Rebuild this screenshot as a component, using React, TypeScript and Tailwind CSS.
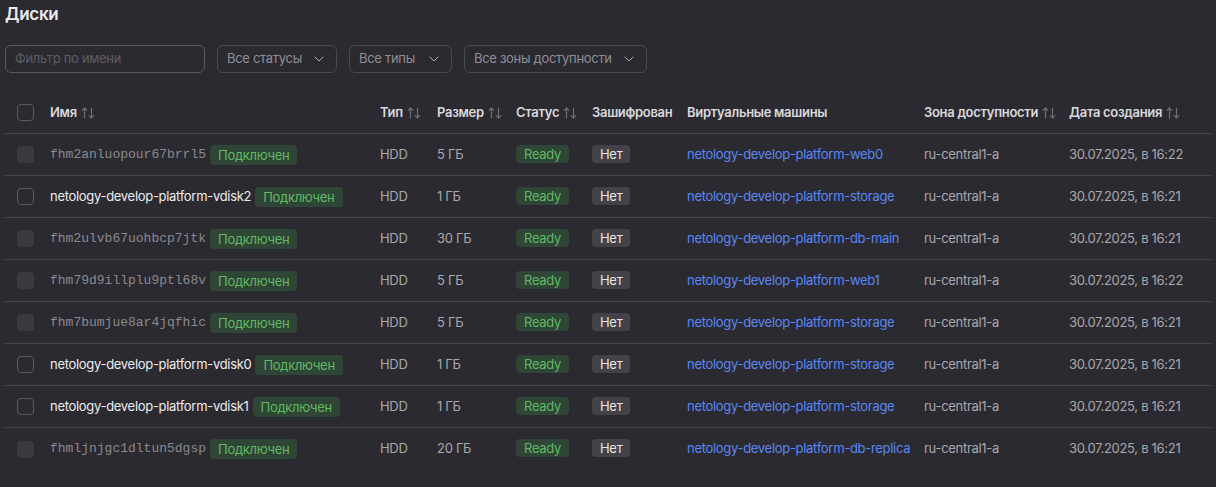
import { ChevronDown } from 'lucide-react'

type Disk = {
  name: string
  mono: boolean
  size: string
  vm: string
  date: string
}

const disks: Disk[] = [
  { name: 'fhm2anluopour67brrl5', mono: true, size: '5 ГБ', vm: 'netology-develop-platform-web0', date: '30.07.2025, в 16:22' },
  { name: 'netology-develop-platform-vdisk2', mono: false, size: '1 ГБ', vm: 'netology-develop-platform-storage', date: '30.07.2025, в 16:21' },
  { name: 'fhm2ulvb67uohbcp7jtk', mono: true, size: '30 ГБ', vm: 'netology-develop-platform-db-main', date: '30.07.2025, в 16:21' },
  { name: 'fhm79d9illplu9ptl68v', mono: true, size: '5 ГБ', vm: 'netology-develop-platform-web1', date: '30.07.2025, в 16:22' },
  { name: 'fhm7bumjue8ar4jqfhic', mono: true, size: '5 ГБ', vm: 'netology-develop-platform-storage', date: '30.07.2025, в 16:21' },
  { name: 'netology-develop-platform-vdisk0', mono: false, size: '1 ГБ', vm: 'netology-develop-platform-storage', date: '30.07.2025, в 16:21' },
  { name: 'netology-develop-platform-vdisk1', mono: false, size: '1 ГБ', vm: 'netology-develop-platform-storage', date: '30.07.2025, в 16:21' },
  { name: 'fhmljnjgc1dltun5dgsp', mono: true, size: '20 ГБ', vm: 'netology-develop-platform-db-replica', date: '30.07.2025, в 16:21' },
]

const SortIcon = () => (
  <svg width="16" height="14" viewBox="0 0 16 14" fill="none" stroke="#6f6e75" strokeWidth="1.2" strokeLinecap="round" strokeLinejoin="round" className="ml-[3px]">
    <path d="M4.5 12V2M2.2 4.3 4.5 2l2.3 2.3" />
    <path d="M11.5 2v10M9.2 9.7l2.3 2.3 2.3-2.3" />
  </svg>
)

const Select = ({ label, width }: { label: string; width: string }) => (
  <div className={`flex h-[28px] items-center justify-between rounded-[6px] border border-[#4b4a51] pl-[9px] pr-[9px] text-[13px] text-[#8f8e94] ${width}`}>
    <span>{label}</span>
    <ChevronDown size={16} strokeWidth={1.2} className="text-[#d0d0d3]" />
  </div>
)

const Checkbox = ({ disabled }: { disabled: boolean }) =>
  disabled ? (
    <div className="h-[17px] w-[17px] rounded-[4px] bg-[#3b3a40]" />
  ) : (
    <div className="h-[17px] w-[17px] rounded-[4px] border border-[#5b5a61]" />
  )

export default function App() {
  return (
    <div
      className="min-h-[487px] w-[1216px] bg-[#2b2a31] text-[13px] tracking-[-0.3px] text-[#e3e3e5]"
      style={{ fontFamily: 'Inter, "Noto Sans", sans-serif' }}
    >
      <div className="px-[5px] pt-[3px]">
        <h1 className="text-[17px] font-semibold leading-[22px] text-[#ececee]">Диски</h1>

        <div className="mt-[20px] flex gap-[12px]">
          <div className="flex h-[28px] w-[200px] items-center rounded-[6px] border border-[#5a5960] pl-[9px] text-[13px] text-[#5f5e65]">
            Фильтр по имени
          </div>
          <Select label="Все статусы" width="w-[120px]" />
          <Select label="Все типы" width="w-[103px]" />
          <Select label="Все зоны доступности" width="w-[183px]" />
        </div>

        <div className="mt-[19px]">
          <div className="flex h-[42px] items-center border-b border-[#47464c] pl-[12px] font-semibold text-[#d9d9dc]">
            <div className="w-[33px]"><Checkbox disabled={false} /></div>
            <div className="flex w-[330px] items-center">Имя<SortIcon /></div>
            <div className="flex w-[57px] items-center">Тип<SortIcon /></div>
            <div className="flex w-[79px] items-center">Размер<SortIcon /></div>
            <div className="flex w-[76px] items-center">Статус<SortIcon /></div>
            <div className="w-[95px]">Зашифрован</div>
            <div className="w-[237px]">Виртуальные машины</div>
            <div className="flex w-[145px] items-center">Зона доступности<SortIcon /></div>
            <div className="flex items-center">Дата создания<SortIcon /></div>
          </div>

          {disks.map((d, i) => (
            <div
              key={d.name}
              className={`flex h-[42px] items-center pl-[12px] ${i < disks.length - 1 ? 'border-b border-[#47464c]' : ''}`}
            >
              <div className="w-[33px]"><Checkbox disabled={d.mono} /></div>
              <div className="flex w-[330px] items-center">
                {d.mono ? (
                  <span className="text-[13px] tracking-normal text-[#8a898f]" style={{ fontFamily: '"Liberation Mono", monospace' }}>
                    {d.name}
                  </span>
                ) : (
                  <span className="text-[#ececee]">{d.name}</span>
                )}
                <span className="ml-[4px] rounded-[4px] bg-[#2f4535] px-[8px] py-[1px] leading-[18px] text-[#5fba63]">
                  Подключен
                </span>
              </div>
              <div className="w-[57px] text-[#a9a8ad]">HDD</div>
              <div className="w-[79px] text-[#a9a8ad]">{d.size}</div>
              <div className="w-[76px]">
                <span className="rounded-[4px] bg-[#2f4535] px-[8px] py-[1px] leading-[18px] text-[#5fba63]">Ready</span>
              </div>
              <div className="w-[95px]">
                <span className="rounded-[4px] bg-[#434248] px-[8px] py-[1px] leading-[18px] text-[#e6e6e8]">Нет</span>
              </div>
              <div className="w-[237px] text-[#5a87f5]">{d.vm}</div>
              <div className="w-[145px] text-[#a9a8ad]">ru-central1-a</div>
              <div className="text-[#a9a8ad]">{d.date}</div>
            </div>
          ))}
        </div>
      </div>
    </div>
  )
}
